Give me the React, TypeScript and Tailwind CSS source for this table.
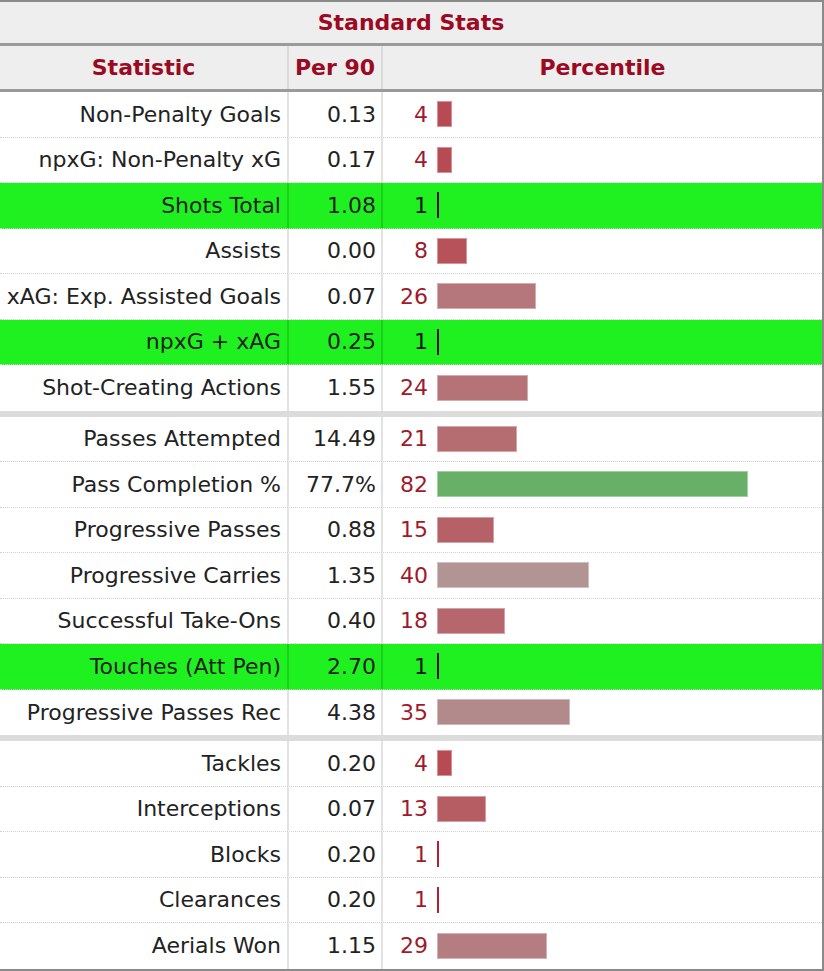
type Stat = { name: string; per90: string; pct: number; highlight?: boolean };

const groups: Stat[][] = [
  [
    { name: 'Non-Penalty Goals', per90: '0.13', pct: 4 },
    { name: 'npxG: Non-Penalty xG', per90: '0.17', pct: 4 },
    { name: 'Shots Total', per90: '1.08', pct: 1, highlight: true },
    { name: 'Assists', per90: '0.00', pct: 8 },
    { name: 'xAG: Exp. Assisted Goals', per90: '0.07', pct: 26 },
    { name: 'npxG + xAG', per90: '0.25', pct: 1, highlight: true },
    { name: 'Shot-Creating Actions', per90: '1.55', pct: 24 },
  ],
  [
    { name: 'Passes Attempted', per90: '14.49', pct: 21 },
    { name: 'Pass Completion %', per90: '77.7%', pct: 82 },
    { name: 'Progressive Passes', per90: '0.88', pct: 15 },
    { name: 'Progressive Carries', per90: '1.35', pct: 40 },
    { name: 'Successful Take-Ons', per90: '0.40', pct: 18 },
    { name: 'Touches (Att Pen)', per90: '2.70', pct: 1, highlight: true },
    { name: 'Progressive Passes Rec', per90: '4.38', pct: 35 },
  ],
  [
    { name: 'Tackles', per90: '0.20', pct: 4 },
    { name: 'Interceptions', per90: '0.07', pct: 13 },
    { name: 'Blocks', per90: '0.20', pct: 1 },
    { name: 'Clearances', per90: '0.20', pct: 1 },
    { name: 'Aerials Won', per90: '1.15', pct: 29 },
  ],
];

// red at 0, grey around 45, green at 82+
function barColor(pct: number) {
  const mix = (a: number[], b: number[], t: number) =>
    a.map((v, i) => Math.round(v + (b[i] - v) * t));
  const red = [184, 66, 76];
  const grey = [178, 158, 158];
  const green = [104, 176, 104];
  const c = pct <= 50 ? mix(red, grey, Math.min(1, pct / 45)) : mix(grey, green, Math.min(1, (pct - 50) / 32));
  return `rgb(${c[0]},${c[1]},${c[2]})`;
}

function StatRow({ stat, last }: { stat: Stat; last: boolean }) {
  const width = stat.pct <= 1 ? 2 : Math.round(stat.pct * 3.79);
  const divider = stat.highlight ? 'border-[#18d018]' : 'border-[#e2e2e2]';
  return (
    <div
      className={`grid grid-cols-[289px_94px_1fr] h-[45.5px] ${
        last ? '' : 'border-b border-dotted border-[#cfcfcf]'
      } ${stat.highlight ? 'bg-[#1ff01f]' : 'bg-white'}`}
    >
      <div className={`flex items-center justify-end pr-[6px] border-r-2 ${divider} whitespace-nowrap`}>
        {stat.name}
      </div>
      <div className={`flex items-center justify-end pr-[5px] border-r-2 ${divider}`}>{stat.per90}</div>
      <div className="flex items-center">
        <span className={`w-[45px] text-right ${stat.highlight ? 'text-[#111]' : 'text-[#a01a2c]'}`}>
          {stat.pct}
        </span>
        <div
          className={`ml-[9px] h-[26px] ${stat.pct > 1 ? 'border border-white/40' : ''}`}
          style={{
            width,
            backgroundColor: stat.highlight ? '#111' : stat.pct <= 1 ? '#b02030' : barColor(stat.pct),
          }}
        />
      </div>
    </div>
  );
}

export default function App() {
  return (
    <div className="w-[824px] h-[971px] bg-white font-['DejaVu_Sans',sans-serif] text-[22px] text-[#222] overflow-hidden">
      <div className="w-[824px] border-t-2 border-r-2 border-b-2 border-[#8a8a8a] bg-white">
        <div className="h-[44px] flex items-center justify-center bg-[#eeeeee] border-b-[3px] border-[#9a9a9a] font-bold text-[#9b0a22]">
          Standard Stats
        </div>
        <div className="grid grid-cols-[289px_94px_1fr] h-[46px] bg-[#eeeeee] border-b-[3px] border-[#9a9a9a] font-bold text-[#9b0a22]">
          <div className="flex items-center justify-center border-r-2 border-[#dadada]">Statistic</div>
          <div className="flex items-center justify-center border-r-2 border-[#dadada]">Per 90</div>
          <div className="flex items-center justify-center">Percentile</div>
        </div>
        {groups.map((g, gi) => (
          <div key={gi} className={gi > 0 ? 'border-t-[6px] border-[#dcdcdc]' : ''}>
            {g.map((s, i) => (
              <StatRow key={s.name} stat={s} last={i === g.length - 1} />
            ))}
          </div>
        ))}
      </div>
    </div>
  );
}
